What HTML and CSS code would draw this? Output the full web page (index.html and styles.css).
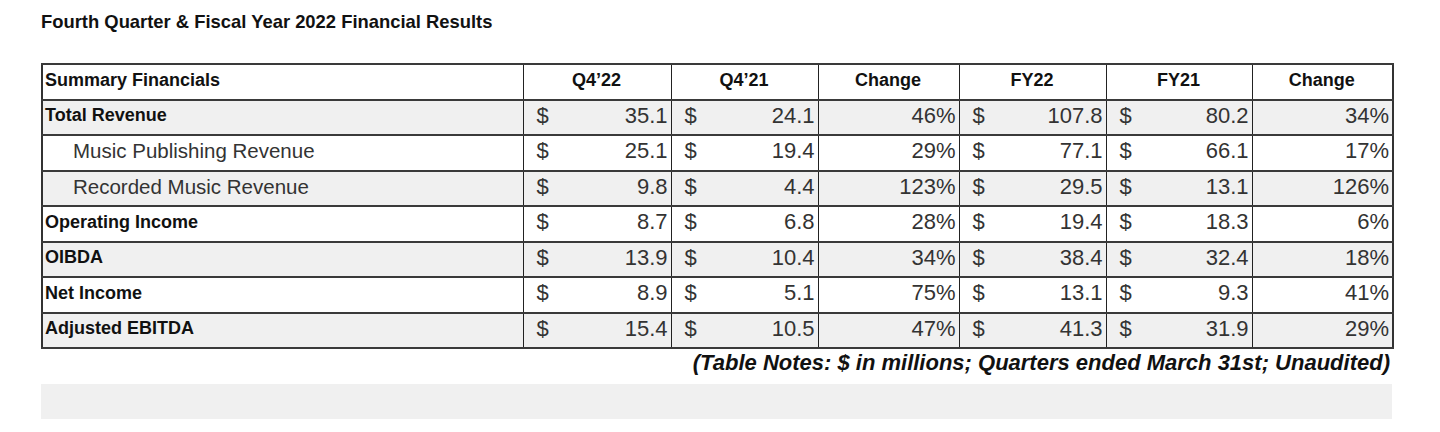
FILE: index.html
```html
<!DOCTYPE html>
<html>
<head>
<meta charset="utf-8">
<link rel="stylesheet" href="styles.css">
</head>
<body>
<div class="page">
  <h1 class="title">Fourth Quarter &amp; Fiscal Year 2022 Financial Results</h1>
  <table class="fin">
    <colgroup>
      <col class="c-label">
      <col class="c-q1"><col class="c-q2"><col class="c-ch1">
      <col class="c-f1"><col class="c-f2"><col class="c-ch2">
    </colgroup>
    <thead>
      <tr class="head">
        <th class="lbl">Summary Financials</th>
        <th>Q4’22</th><th>Q4’21</th><th>Change</th>
        <th>FY22</th><th>FY21</th><th>Change</th>
      </tr>
    </thead>
    <tbody>
      <tr class="grey">
        <td class="lbl b">Total Revenue</td>
        <td><div class="m"><span>$</span><span>35.1</span></div></td>
        <td><div class="m"><span>$</span><span>24.1</span></div></td>
        <td class="pct">46%</td>
        <td><div class="m"><span>$</span><span>107.8</span></div></td>
        <td><div class="m"><span>$</span><span>80.2</span></div></td>
        <td class="pct">34%</td>
      </tr>
      <tr>
        <td class="lbl sub">Music Publishing Revenue</td>
        <td><div class="m"><span>$</span><span>25.1</span></div></td>
        <td><div class="m"><span>$</span><span>19.4</span></div></td>
        <td class="pct">29%</td>
        <td><div class="m"><span>$</span><span>77.1</span></div></td>
        <td><div class="m"><span>$</span><span>66.1</span></div></td>
        <td class="pct">17%</td>
      </tr>
      <tr class="grey">
        <td class="lbl sub">Recorded Music Revenue</td>
        <td><div class="m"><span>$</span><span>9.8</span></div></td>
        <td><div class="m"><span>$</span><span>4.4</span></div></td>
        <td class="pct">123%</td>
        <td><div class="m"><span>$</span><span>29.5</span></div></td>
        <td><div class="m"><span>$</span><span>13.1</span></div></td>
        <td class="pct">126%</td>
      </tr>
      <tr>
        <td class="lbl b">Operating Income</td>
        <td><div class="m"><span>$</span><span>8.7</span></div></td>
        <td><div class="m"><span>$</span><span>6.8</span></div></td>
        <td class="pct">28%</td>
        <td><div class="m"><span>$</span><span>19.4</span></div></td>
        <td><div class="m"><span>$</span><span>18.3</span></div></td>
        <td class="pct">6%</td>
      </tr>
      <tr class="grey">
        <td class="lbl b">OIBDA</td>
        <td><div class="m"><span>$</span><span>13.9</span></div></td>
        <td><div class="m"><span>$</span><span>10.4</span></div></td>
        <td class="pct">34%</td>
        <td><div class="m"><span>$</span><span>38.4</span></div></td>
        <td><div class="m"><span>$</span><span>32.4</span></div></td>
        <td class="pct">18%</td>
      </tr>
      <tr>
        <td class="lbl b">Net Income</td>
        <td><div class="m"><span>$</span><span>8.9</span></div></td>
        <td><div class="m"><span>$</span><span>5.1</span></div></td>
        <td class="pct">75%</td>
        <td><div class="m"><span>$</span><span>13.1</span></div></td>
        <td><div class="m"><span>$</span><span>9.3</span></div></td>
        <td class="pct">41%</td>
      </tr>
      <tr class="grey">
        <td class="lbl b">Adjusted EBITDA</td>
        <td><div class="m"><span>$</span><span>15.4</span></div></td>
        <td><div class="m"><span>$</span><span>10.5</span></div></td>
        <td class="pct">47%</td>
        <td><div class="m"><span>$</span><span>41.3</span></div></td>
        <td><div class="m"><span>$</span><span>31.9</span></div></td>
        <td class="pct">29%</td>
      </tr>
    </tbody>
  </table>
  <div class="notes">(Table Notes: $ in millions; Quarters ended March 31st; Unaudited)</div>
  <div class="blank"></div>
</div>
</body>
</html>
```
FILE: styles.css
```css
html, body {
  margin: 0;
  padding: 0;
  background: #fff;
}
body {
  font-family: "Liberation Sans Narrow", "Liberation Sans", Arial, sans-serif;
  color: #111;
}
.page {
  padding: 11px 48px 0 41px;
  width: 1351px;
}
.title {
  margin: 0;
  height: 52px;
  font-size: 18.4px;
  font-weight: bold;
  line-height: 22px;
  color: #111;
}
.fin {
  width: 1351px;
  border-collapse: collapse;
  table-layout: fixed;
  border: 2px solid #333;
}
.c-label { width: 481px; }
.c-q1 { width: 148px; }
.c-q2 { width: 147px; }
.c-ch1 { width: 141px; }
.c-f1 { width: 147px; }
.c-f2 { width: 146px; }
.c-ch2 { width: 141px; }
.fin th, .fin td {
  height: 30.5px;
  padding: 0 3px 3px 2px;
  border-left: 1px solid #222;
  border-right: 1px solid #222;
  border-top: 2px solid #3a3a3a;
  border-bottom: 2px solid #3a3a3a;
  font-size: 22px;
  color: #333;
  white-space: nowrap;
}
.fin th {
  font-weight: bold;
  font-size: 18px;
  color: #111;
  text-align: center;
}
.fin th.lbl { text-align: left; }
.grey td { background: #f0f0f0; }
.lbl.b {
  font-weight: bold;
  font-size: 18px;
  color: #111;
}
.lbl.sub {
  padding-left: 30px;
  font-size: 20.5px;
  color: #333;
}
.m {
  display: flex;
  justify-content: space-between;
  padding-left: 11px;
}
.pct { text-align: right; }
.notes {
  height: 35px;
  line-height: 28px;
  text-align: right;
  font-size: 22px;
  font-weight: bold;
  font-style: italic;
  color: #111;
  padding-right: 2px;
}
.blank {
  height: 35px;
  background: #f0f0f0;
}
```
